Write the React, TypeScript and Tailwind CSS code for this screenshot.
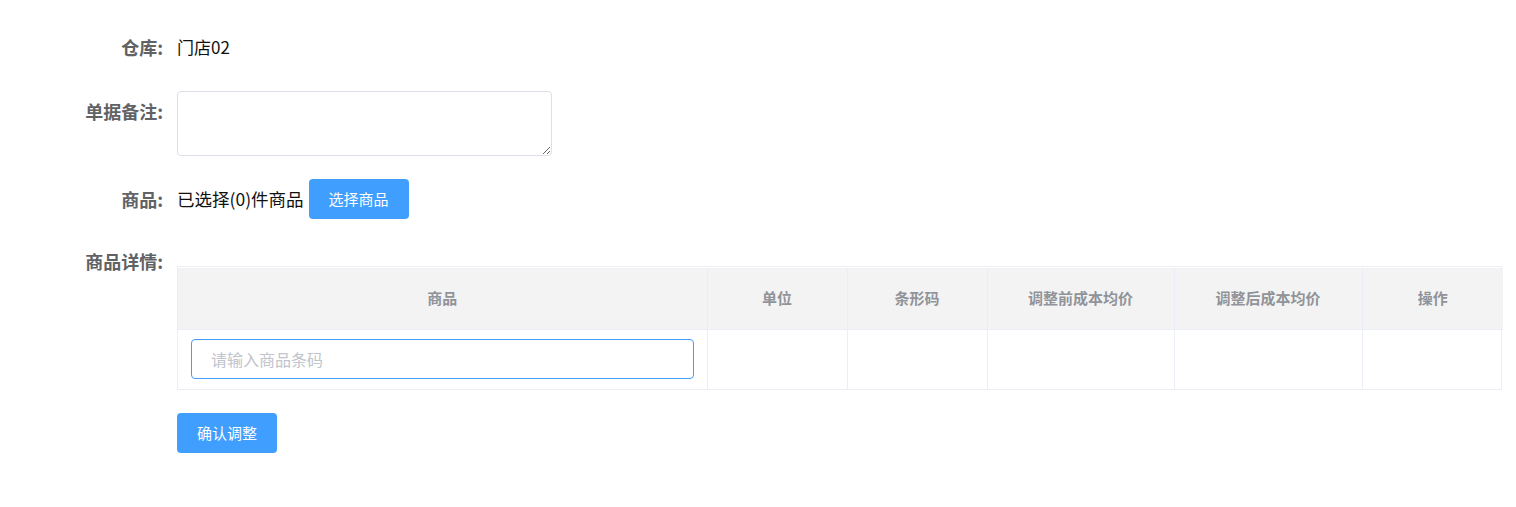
import React from 'react'

const font = { fontFamily: '"Noto Sans CJK SC", "Noto Sans", sans-serif' }

function Label({ children }: { children: React.ReactNode }) {
  return (
    <div className="w-[177px] shrink-0 pr-[14px] text-right text-[18px] font-bold leading-[40px] text-[#606266]">
      {children}
    </div>
  )
}

const cols = [
  { title: '商品', w: 'w-[529px]' },
  { title: '单位', w: 'w-[140px]' },
  { title: '条形码', w: 'w-[140px]' },
  { title: '调整前成本均价', w: 'w-[187px]' },
  { title: '调整后成本均价', w: 'w-[188px]' },
  { title: '操作', w: 'w-[141px]' },
]

export default function App() {
  return (
    <div className="min-h-screen bg-white pt-[27px]" style={font}>
      <div className="flex">
        <Label>仓库:</Label>
        <div className="text-[17px] leading-[40px] text-[#111]">门店02</div>
      </div>

      <div className="mt-[24px] flex">
        <Label>单据备注:</Label>
        <textarea className="h-[65px] w-[375px] rounded-[4px] border border-[#dcdfe6] px-[15px] py-[5px] text-[14px] outline-none" />
      </div>

      <div className="mt-[23px] flex">
        <Label>商品:</Label>
        <div className="flex items-center">
          <span className="text-[17.5px] leading-[40px] text-[#111]">已选择(0)件商品</span>
          <button className="ml-[5px] h-[40px] w-[100px] rounded-[4px] bg-[#409eff] text-[15px] text-white">
            选择商品
          </button>
        </div>
      </div>

      <div className="mt-[22px] flex">
        <Label>商品详情:</Label>
        <div className="pt-[25px]">
          <div className="w-[1325px] border border-[#ebeef5] pt-px">
            <table className="w-full table-fixed border-collapse">
              <thead>
                <tr className="h-[61px] bg-[#f3f3f3]">
                  {cols.map((c, i) => (
                    <th
                      key={c.title}
                      className={`${c.w} ${i > 0 ? 'border-l' : ''} border-b border-[#ebeef5] text-center text-[15px] font-bold text-[#909399]`}
                    >
                      {c.title}
                    </th>
                  ))}
                </tr>
              </thead>
              <tbody>
                <tr className="h-[60px]">
                  <td className="px-[13px]">
                    <input
                      placeholder="请输入商品条码"
                      className="h-[40px] w-full rounded-[4px] border border-[#409eff] px-[19px] text-[16px] text-[#606266] outline-none placeholder:text-[#c0c4cc]"
                    />
                  </td>
                  <td className="border-l border-[#ebeef5]" />
                  <td className="border-l border-[#ebeef5]" />
                  <td className="border-l border-[#ebeef5]" />
                  <td className="border-l border-[#ebeef5]" />
                  <td className="border-l border-[#ebeef5]" />
                </tr>
              </tbody>
            </table>
          </div>
          <button className="mt-[23px] h-[40px] w-[100px] rounded-[4px] bg-[#409eff] text-[15px] text-white">
            确认调整
          </button>
        </div>
      </div>
    </div>
  )
}
